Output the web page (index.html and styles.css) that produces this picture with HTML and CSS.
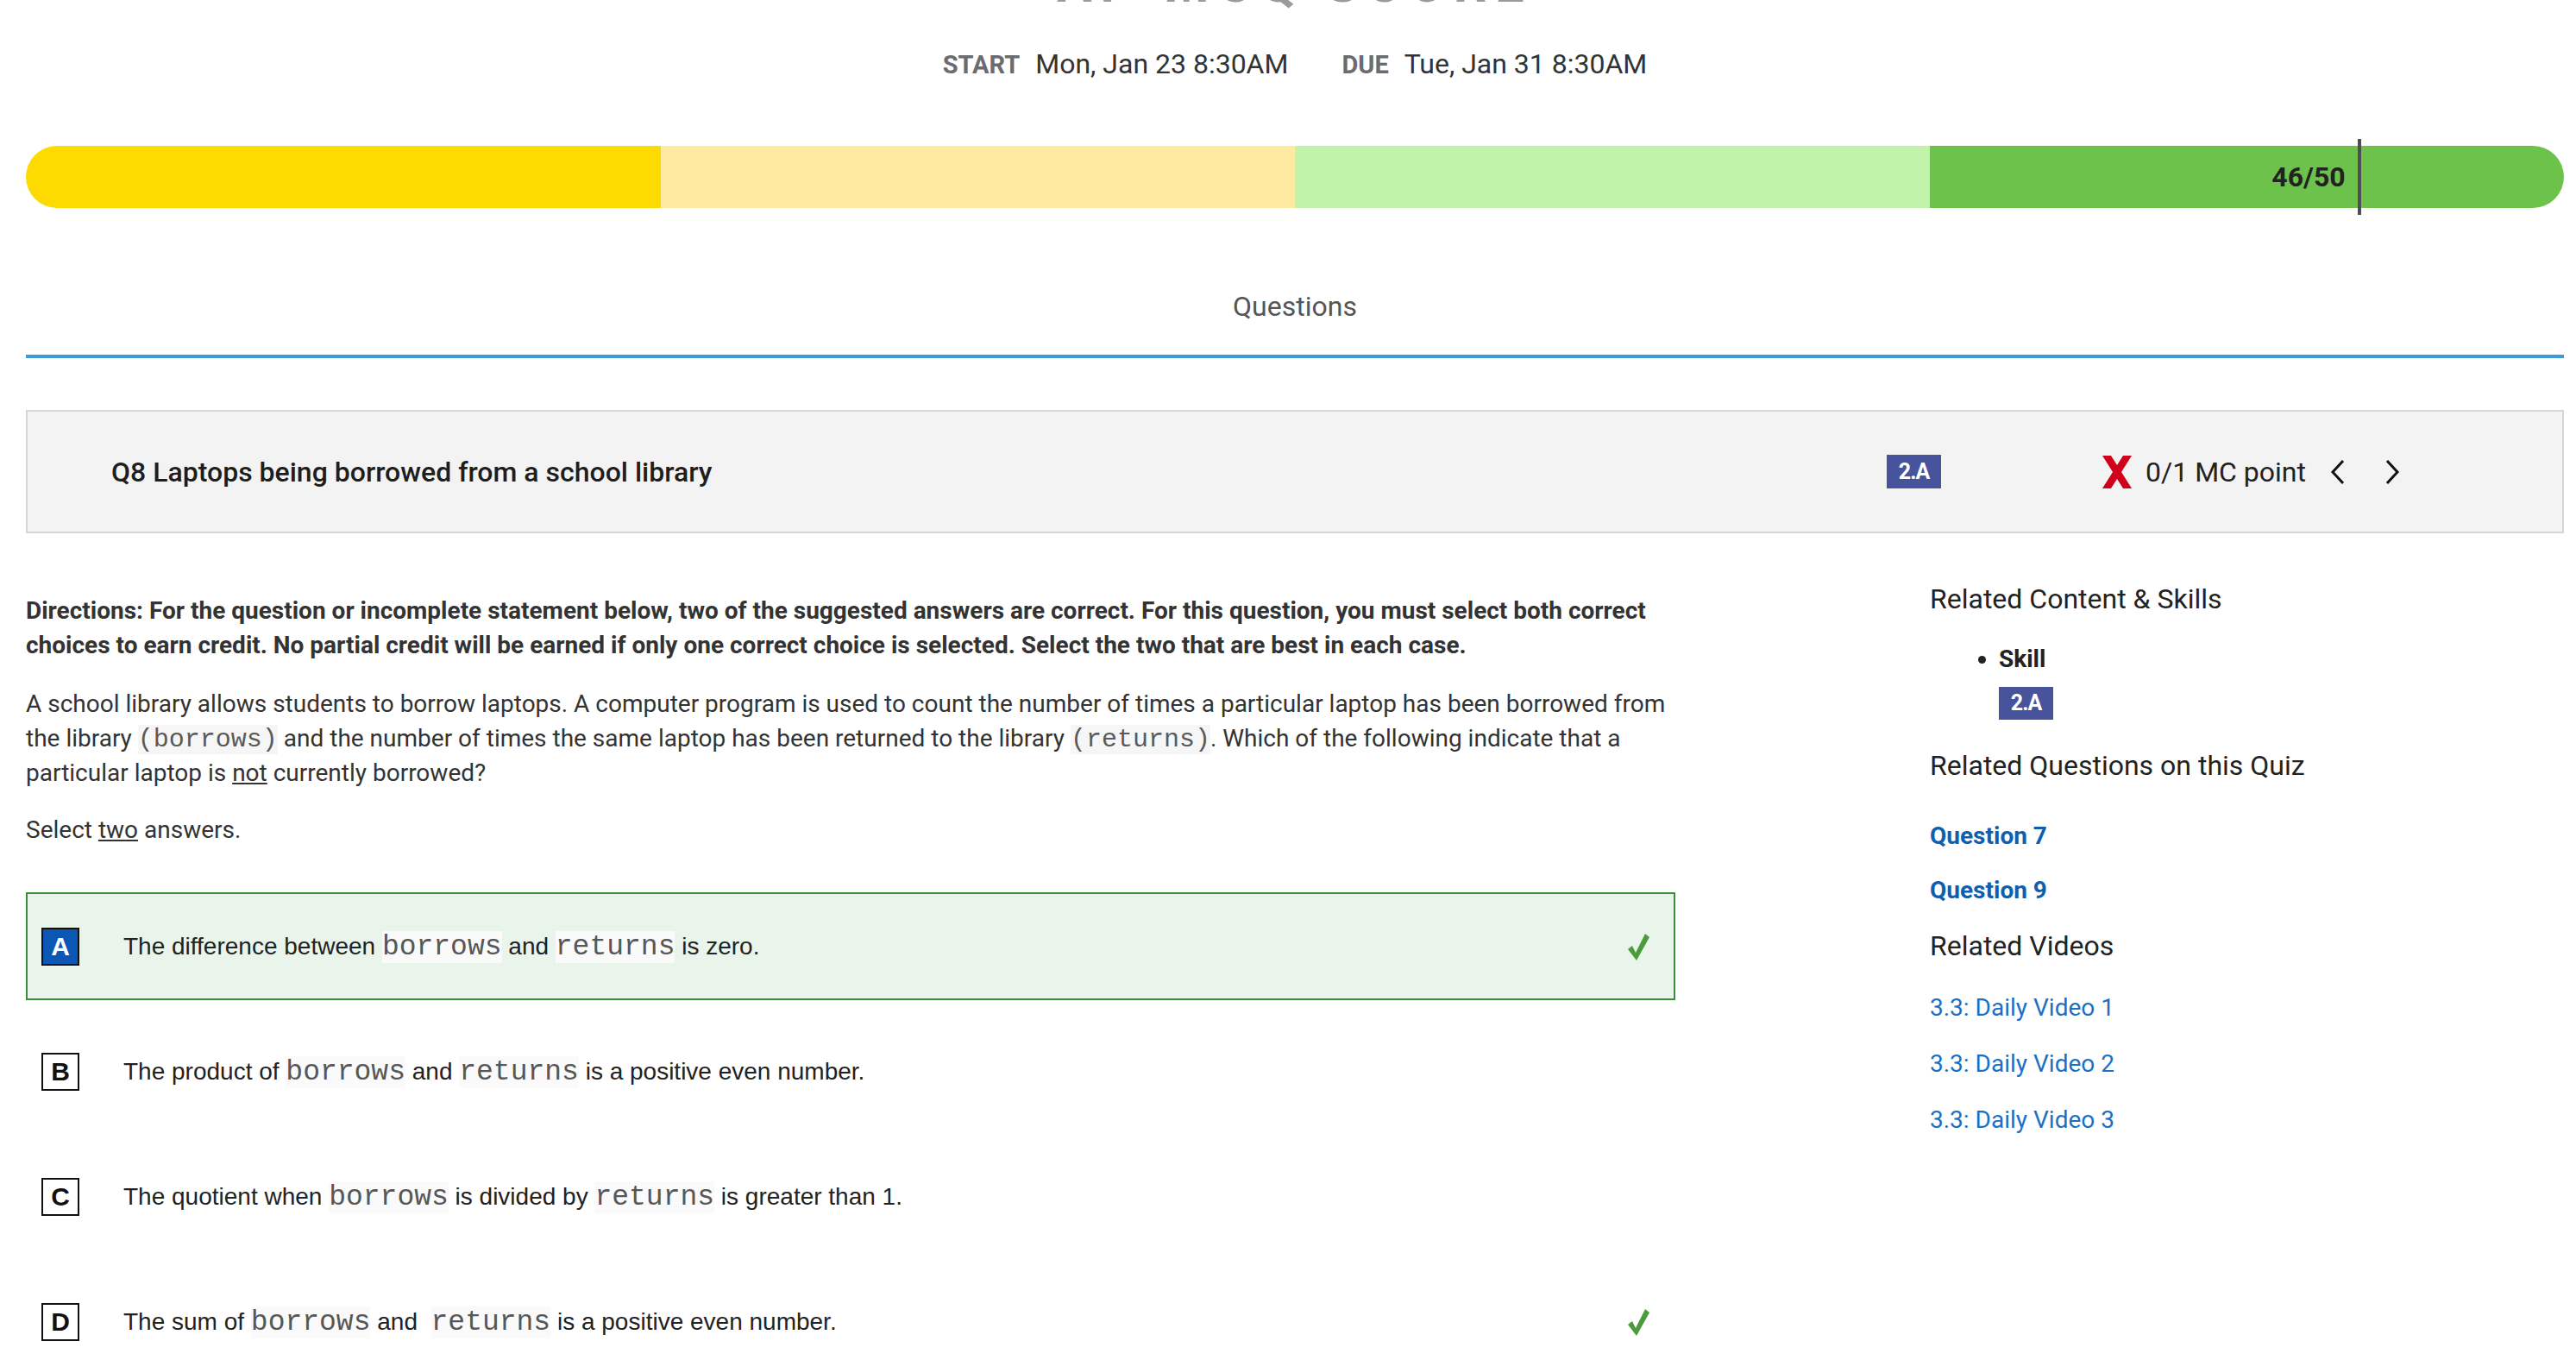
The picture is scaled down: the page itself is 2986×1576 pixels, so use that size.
FILE: index.html
```html
<!DOCTYPE html>
<html lang="en">
<head>
<meta charset="utf-8">
<title>MCQ Quiz Score</title>
<link rel="stylesheet" href="styles.css">
</head>
<body>
<div class="page">
  <h1 class="quiz-title">AP MCQ SCORE</h1>

  <div class="dates">
    <span class="date-label">START</span>
    <span class="date-value">Mon, Jan 23 8:30AM</span>
    <span class="date-label due">DUE</span>
    <span class="date-value">Tue, Jan 31 8:30AM</span>
  </div>

  <div class="score-bar">
    <div class="segments">
      <div class="seg seg-1"></div>
      <div class="seg seg-2"></div>
      <div class="seg seg-3"></div>
      <div class="seg seg-4"></div>
    </div>
    <div class="marker" style="left: 92%;">
      <span class="marker-label">46/50</span>
    </div>
  </div>

  <div class="tabs">
    <div class="tab">Questions</div>
  </div>

  <div class="q-header">
    <div class="q-title">Q8 Laptops being borrowed from a school library</div>
    <span class="skill-badge">2.A</span>
    <div class="q-score">
      <svg class="x-icon" viewBox="0 0 40 40" width="40" height="40" aria-hidden="true">
        <path d="M3 1 L13 1 L20 12 L27 1 L37 1 L25 20 L37 39 L27 39 L20 28 L13 39 L3 39 L15 20 Z" fill="#d0021b"/>
      </svg>
      <span class="score-text">0/1 MC point</span>
    </div>
    <div class="q-nav">
      <svg class="chev" viewBox="0 0 18 30" width="18" height="30" aria-hidden="true"><path d="M15 2 L3 15 L15 28" fill="none" stroke="#111" stroke-width="3"/></svg>
      <svg class="chev chev-next" viewBox="0 0 18 30" width="18" height="30" aria-hidden="true"><path d="M3 2 L15 15 L3 28" fill="none" stroke="#111" stroke-width="3"/></svg>
    </div>
  </div>

  <div class="main">
    <div class="question">
      <p class="directions">Directions: For the question or incomplete statement below, two of the suggested answers are correct. For this question, you must select both correct choices to earn credit. No partial credit will be earned if only one correct choice is selected. Select the two that are best in each case.</p>
      <p class="stem">A school library allows students to borrow laptops. A computer program is used to count the number of times a particular laptop has been borrowed from the library <code class="code">(borrows)</code> and the number of times the same laptop has been returned to the library <code class="code">(returns)</code>. Which of the following indicate that a particular laptop is <u>not</u> currently borrowed?</p>
      <p class="select">Select <u>two</u> answers.</p>

      <div class="answers">
        <div class="answer answer-correct-selected">
          <span class="letter letter-selected">A</span>
          <span class="answer-text">The difference between <code class="acode">borrows</code> and <code class="acode">returns</code> is zero.</span>
          <svg class="check" viewBox="0 0 28 36" width="28" height="36" aria-hidden="true"><path d="M2 21 L7 17 L11 25 L22 3 L27 7 L12 34 Z" fill="#4a9b3b"/></svg>
        </div>
        <div class="answer">
          <span class="letter">B</span>
          <span class="answer-text">The product of <code class="acode">borrows</code> and <code class="acode">returns</code> is a positive even number.</span>
        </div>
        <div class="answer">
          <span class="letter">C</span>
          <span class="answer-text">The quotient when <code class="acode">borrows</code> is divided by <code class="acode">returns</code> is greater than 1.</span>
        </div>
        <div class="answer">
          <span class="letter">D</span>
          <span class="answer-text">The sum of <code class="acode">borrows</code> and &nbsp;<code class="acode">returns</code> is a positive even number.</span>
          <svg class="check" viewBox="0 0 28 36" width="28" height="36" aria-hidden="true"><path d="M2 21 L7 17 L11 25 L22 3 L27 7 L12 34 Z" fill="#4a9b3b"/></svg>
        </div>
      </div>
    </div>

    <aside class="related">
      <h3 class="rel-heading">Related Content &amp; Skills</h3>
      <ul class="skill-list">
        <li>Skill</li>
      </ul>
      <span class="skill-badge side-badge">2.A</span>

      <h3 class="rel-heading rel-questions">Related Questions on this Quiz</h3>
      <a class="q-link first-link" href="#">Question 7</a>
      <a class="q-link" href="#">Question 9</a>

      <h3 class="rel-heading rel-videos">Related Videos</h3>
      <a class="v-link first-video" href="#">3.3: Daily Video 1</a>
      <a class="v-link" href="#">3.3: Daily Video 2</a>
      <a class="v-link" href="#">3.3: Daily Video 3</a>
    </aside>
  </div>
</div>
</body>
</html>
```
FILE: styles.css
```css
html, body {
  margin: 0;
  padding: 0;
  background: #ffffff;
}

body {
  font-family: Roboto, "Noto Sans", Arial, sans-serif;
  color: #333;
  font-size: 28px;
  line-height: 40px;
  overflow: hidden;
}

.page {
  padding: 0 14px 0 30px;
}

.quiz-title {
  margin: -48px 0 0 0;
  font-size: 60px;
  line-height: 60px;
  font-weight: 700;
  color: #9a9a9a;
  text-align: center;
  letter-spacing: 10px;
}

.dates {
  margin-top: 42px;
  display: flex;
  justify-content: center;
  align-items: baseline;
  line-height: 40px;
}

.date-label {
  font-size: 29px;
  font-weight: 700;
  color: #6b6b72;
  margin-right: 18px;
}

.date-label.due {
  margin-left: 62px;
}

.date-value {
  font-size: 32px;
  color: #333;
}

.score-bar {
  position: relative;
  margin-top: 74px;
  height: 72px;
}

.segments {
  display: flex;
  height: 72px;
  border-radius: 36px;
  overflow: hidden;
}

.seg {
  flex: 1;
}

.seg-1 { background: #fddb00; }
.seg-2 { background: #feeaa0; }
.seg-3 { background: #c1f4aa; }
.seg-4 { background: #6cc24a; }

.marker {
  position: absolute;
  top: -8px;
  width: 4px;
  height: 88px;
  margin-left: -4px;
  background: #4d4d52;
}

.marker-label {
  position: absolute;
  right: 18px;
  top: 24px;
  font-size: 32px;
  line-height: 40px;
  font-weight: 700;
  color: #222;
  white-space: nowrap;
}

.tabs {
  margin-top: 94px;
  border-bottom: 4px solid #3f9bd7;
  display: flex;
  justify-content: center;
}

.tab {
  font-size: 32px;
  line-height: 40px;
  color: #555;
  padding-bottom: 36px;
}

.q-header {
  margin-top: 60px;
  height: 139px;
  background: #f3f3f3;
  border: 2px solid #d6d6da;
  display: flex;
  align-items: center;
  padding: 0 188px 0 97px;
}

.q-title {
  flex: 1;
  font-size: 32px;
  font-weight: 500;
  color: #1e1e1e;
}

.skill-badge {
  display: inline-flex;
  align-items: center;
  justify-content: center;
  width: 63px;
  height: 39px;
  background: #47539a;
  color: #fff;
  font-weight: 700;
  font-size: 25px;
  letter-spacing: -1px;
}

.q-score {
  margin-left: 184px;
  display: flex;
  align-items: center;
}

.x-icon {
  display: block;
  margin-right: 13px;
}

.score-text {
  font-size: 32px;
  color: #222;
}

.q-nav {
  margin-left: 28px;
  display: flex;
  align-items: center;
}

.chev {
  display: block;
}

.chev-next {
  margin-left: 45px;
}

.main {
  margin-top: 54px;
  display: grid;
  grid-template-columns: 1912px 1fr;
  column-gap: 295px;
}

.question {
  padding-top: 16px;
}

.directions {
  margin: 0;
  font-weight: 700;
  color: #333;
}

.stem {
  margin: 28px 0 0 0;
  color: #333;
}

.select {
  margin: 26px 0 0 0;
  color: #333;
}

.code {
  font-family: "Liberation Mono", "DejaVu Sans Mono", monospace;
  font-size: 30px;
  line-height: 1;
  color: #5a5a5a;
  background: #f6f6f6;
}

.answers {
  margin-top: 52px;
  display: flex;
  flex-direction: column;
  gap: 20px;
}

.answer {
  height: 121px;
  border: 2px solid transparent;
  display: flex;
  align-items: center;
  padding: 0 27px 0 16px;
  font-family: "Liberation Sans", Arial, sans-serif;
  font-size: 28px;
  color: #222;
}

.answer-correct-selected {
  border-color: #3a8e38;
  background: #e9f4ea;
}

.letter {
  box-sizing: border-box;
  width: 44px;
  height: 44px;
  border: 2px solid #111;
  background: #fff;
  display: inline-flex;
  align-items: center;
  justify-content: center;
  font-weight: 700;
  font-size: 30px;
  color: #111;
  flex-shrink: 0;
}

.letter-selected {
  background: #0b57b3;
  color: #fff;
}

.answer-text {
  flex: 1;
  margin-left: 51px;
}

.acode {
  font-family: "Liberation Mono", "DejaVu Sans Mono", monospace;
  font-size: 33px;
  line-height: 1;
  color: #575757;
  background: #fafafa;
}

.check {
  display: block;
  flex-shrink: 0;
}

.related {
  display: flex;
  flex-direction: column;
  align-items: flex-start;
}

.rel-heading {
  margin: 0;
  font-size: 32px;
  line-height: 44px;
  font-weight: 400;
  color: #222;
}

.skill-list {
  margin: 28px 0 0 0;
  padding: 0 0 0 80px;
  list-style: disc;
  font-weight: 700;
  color: #222;
}

.side-badge {
  margin: 12px 0 0 80px;
  height: 38px;
}

.rel-questions {
  margin-top: 31px;
}

.q-link {
  font-weight: 700;
  color: #0d5fb0;
  text-decoration: none;
  margin-top: 23px;
}

.q-link.first-link {
  margin-top: 40px;
}

.rel-videos {
  margin-top: 22px;
}

.v-link {
  color: #1a70c6;
  text-decoration: none;
  margin-top: 25px;
}

.v-link.first-video {
  margin-top: 30px;
}
```
